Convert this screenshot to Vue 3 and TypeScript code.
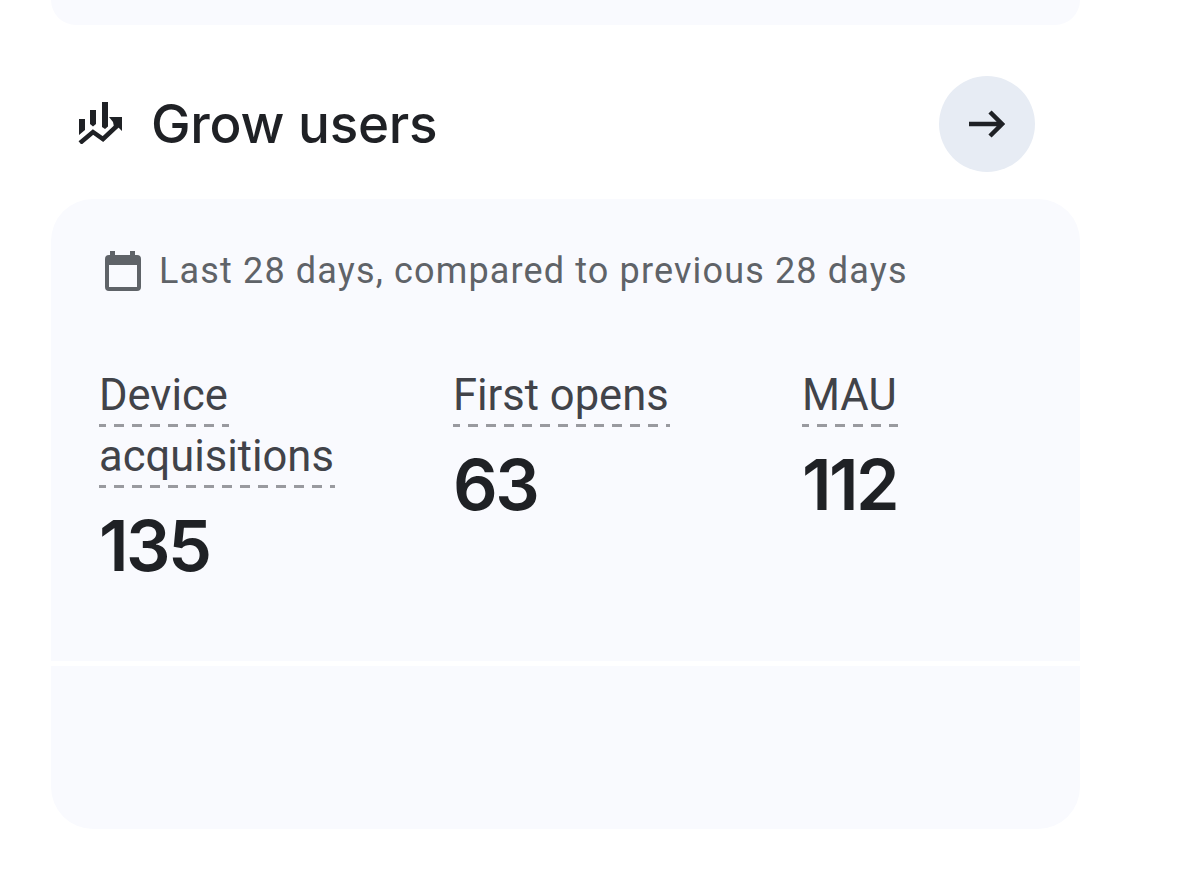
<script setup lang="ts">
interface Metric { lines: string[]; value: string; width: number }
const metrics: Metric[] = [
  { lines: ['Device', 'acquisitions'], value: '135', width: 354 },
  { lines: ['First opens'], value: '63', width: 349 },
  { lines: ['MAU'], value: '112', width: 180 },
]
</script>

<template>
  <div class="page">
    <div class="top-card"></div>
    <header class="header">
      <div class="title-group">
        <svg class="grow-icon" viewBox="0 0 44 42" aria-hidden="true">
          <path fill="#1f2125" d="M1 17h6v11l-6 5zM12 8h6v14l-3 2.500-3-2.500zM24 0h6v24.500l-3 2.500-3-2zM31 15h13v14l-4.500-4.500-3 2.500-1.500-7z" />
          <path d="M2 41l13-11 10 7 16-15" fill="none" stroke="#1f2125" stroke-width="4.500" />
        </svg>
        <h2 class="title">Grow users</h2>
      </div>
      <button class="next" type="button" aria-label="Next">
        <svg viewBox="0 0 36 28" class="arrow" aria-hidden="true">
          <path d="M0 14h33M21 2 33 14 21 26" fill="none" stroke="#1f2125" stroke-width="4.500" />
        </svg>
      </button>
    </header>
    <section class="card">
      <div class="card-main">
        <div class="range">
          <svg class="calendar" viewBox="0 0 36 40" aria-hidden="true">
            <path fill="#5f6368" fill-rule="evenodd" d="M5 0h5v4h15V0h5v4h2a4 4 0 0 1 4 4v28a4 4 0 0 1-4 4H4a4 4 0 0 1-4-4V8a4 4 0 0 1 4-4h1zM4 14v22h28V14z" />
          </svg>
          <span>Last 28 days, compared to previous 28 days</span>
        </div>
        <div class="metrics">
          <div v-for="m in metrics" :key="m.value" class="metric" :style="{ width: m.width + 'px' }">
            <span v-for="line in m.lines" :key="line" class="label">{{ line }}</span>
            <div class="value">{{ m.value }}</div>
          </div>
        </div>
      </div>
      <div class="card-foot"></div>
    </section>
  </div>
</template>

<style>
html, body { margin: 0; background: #fff; }
</style>

<style scoped>
.page {
  width: 1179px;
  height: 880px;
  overflow: hidden;
  box-sizing: border-box;
  padding: 0 99px 0 51px;
  font-family: Roboto, "Liberation Sans", sans-serif;
  color: #1f2125;
}
.top-card {
  height: 25px;
  background: #f9fafe;
  border-radius: 0 0 42px 42px;
}
.header {
  display: flex;
  align-items: center;
  justify-content: space-between;
  height: 96px;
  margin-top: 51px;
  padding: 0 45px 0 27px;
}
.title-group { display: flex; align-items: center; gap: 29px; }
.grow-icon { width: 44px; height: 42px; display: block; margin-bottom: 2px; }
.title {
  margin: 0;
  font-family: Inter, Roboto, sans-serif;
  font-size: 53px;
  font-weight: 500;
  letter-spacing: -0.25px;
  line-height: 60px;
}
.next {
  width: 96px;
  height: 96px;
  border: 0;
  padding: 0;
  border-radius: 50%;
  background: #e7ecf4;
  display: flex;
  align-items: center;
  justify-content: center;
}
.arrow { width: 36px; height: 28px; display: block; }
.card { margin-top: 27px; }
.card-main {
  height: 462px;
  box-sizing: border-box;
  padding: 52px 48px 0;
  background: #f9fafe;
  border-radius: 42px 42px 0 0;
}
.card-foot {
  height: 163px;
  margin-top: 5px;
  background: #f9fafe;
  border-radius: 0 0 42px 42px;
}
.range {
  display: flex;
  align-items: center;
  gap: 18px;
  padding-left: 6px;
  height: 40px;
  font-size: 36px;
  letter-spacing: 1.15px;
  color: #5f6368;
}
.calendar { width: 36px; height: 40px; display: block; flex: none; }
.metrics { display: flex; margin-top: 78px; }
.metric { flex: none; }
.label {
  display: block;
  width: fit-content;
  height: 61px;
  box-sizing: border-box;
  padding-right: 1px;
  line-height: 54px;
  font-size: 43.5px;
  color: #414349;
  background-image: repeating-linear-gradient(90deg, #999a9f -3px 7px, transparent 7px 15px);
  background-size: 100% 3px;
  background-position: left 0 top 55px;
  background-repeat: no-repeat;
}
.value {
  font-family: Inter, Roboto, sans-serif;
  font-size: 70px;
  font-weight: 600;
  font-kerning: none;
  letter-spacing: -2.6px;
  line-height: 84px;
  margin-top: 13px;
  color: #1f2125;
}
</style>
